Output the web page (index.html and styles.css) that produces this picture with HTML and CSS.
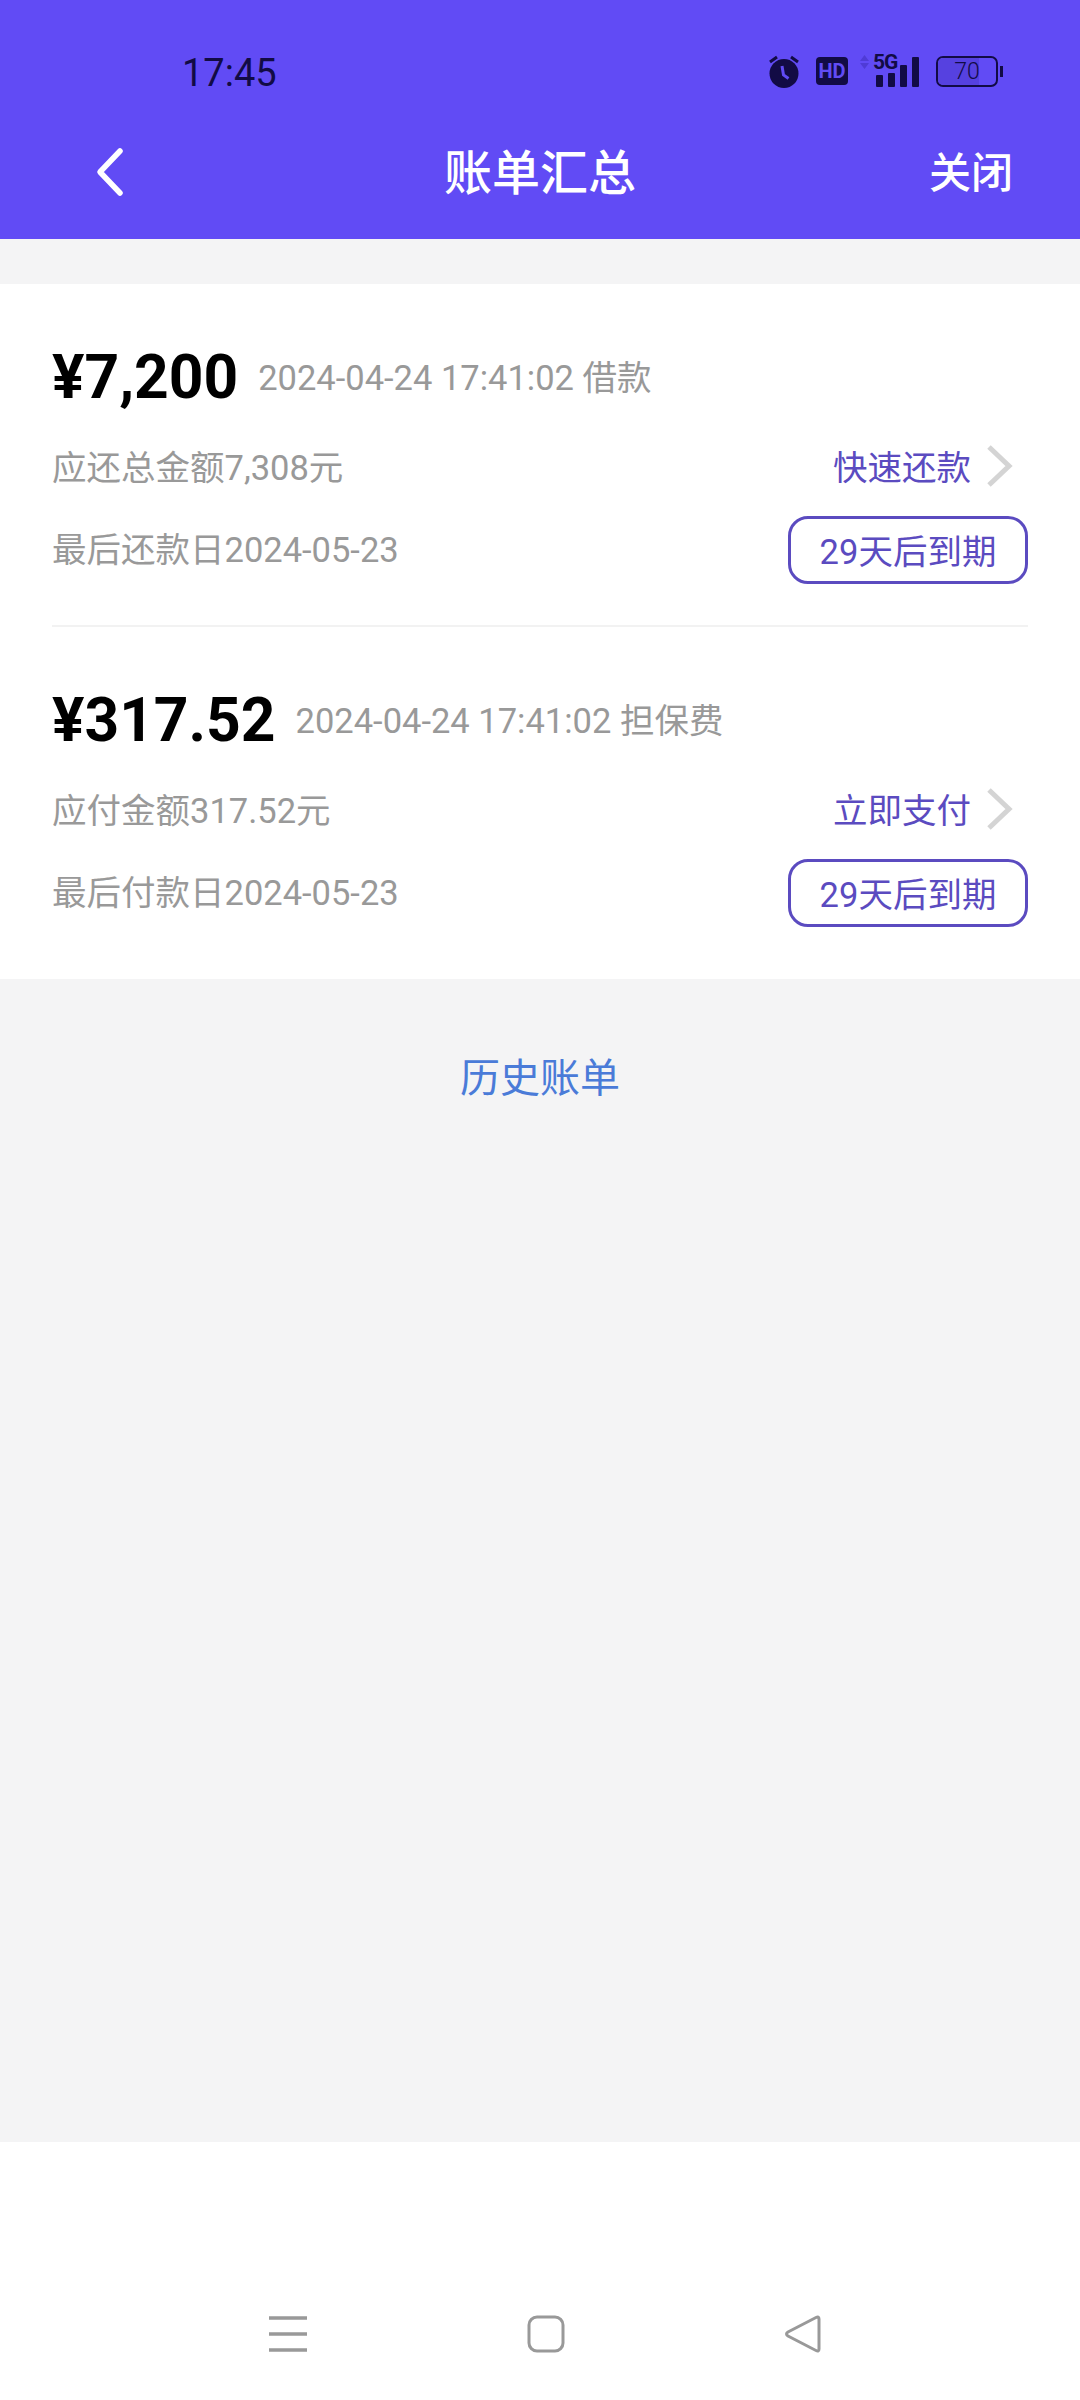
FILE: index.html
```html
<!DOCTYPE html>
<html lang="zh-CN">
<head>
    <meta charset="UTF-8" />
    <meta name="viewport" content="width=device-width, initial-scale=1.0" />
    <title>账单汇总</title>
    <link rel="stylesheet" href="styles.css">
</head>
<body>

<header class="top">
    <div class="status">
        <span class="time">17:45</span>
        <div class="status-icons">
            <svg class="ic-alarm" width="32" height="33" viewBox="0 0 32 33">
                <circle cx="16" cy="18.500" r="14.500" fill="#120b45"/>
                <path d="M2 7l7-5M30 7l-7-5" stroke="#120b45" stroke-width="3" fill="none"/>
                <path d="M14 11l1.500 9 5 3.500" stroke="#614bf5" stroke-width="3" fill="none"/>
            </svg>
            <span class="hd">HD</span>
            <div class="signal">
                <svg class="arrows" width="9" height="14" viewBox="0 0 9 14">
                    <path d="M4.500 0l4.500 6H0zM4.500 14L9 8H0z" fill="#4f3bd6"/>
                </svg>
                <span class="five-g">5G</span>
                <i class="bar b1"></i><i class="bar b2"></i><i class="bar b3"></i><i class="bar b4"></i>
            </div>
            <div class="battery">
                <div class="battery-body">
                    <div class="battery-fill" style="width:70%"></div>
                    <span>70</span>
                </div>
                <i class="battery-tip"></i>
            </div>
        </div>
    </div>
    <nav class="titlebar">
        <svg class="back" width="34" height="50" viewBox="0 0 34 50">
            <path d="M27 4L7 25l20 21" stroke="#fff" stroke-width="5.500" stroke-linecap="round" stroke-linejoin="round" fill="none"/>
        </svg>
        <h1>账单汇总</h1>
        <a class="close">关闭</a>
    </nav>
</header>

<main class="content">
    <section class="card">
        <div class="bill">
            <div class="bill-head">
                <span class="amount">¥7,200</span>
                <span class="meta">2024-04-24 17:41:02 借款</span>
            </div>
            <div class="bill-row">
                <span class="label">应还总金额7,308元</span>
                <a class="action">快速还款
                    <svg width="28" height="44" viewBox="0 0 28 44"><path d="M4 3l20 19L4 41" stroke="#d4d4d4" stroke-width="5" fill="none"/></svg>
                </a>
            </div>
            <div class="bill-row">
                <span class="label">最后还款日2024-05-23</span>
                <span class="due">29天后到期</span>
            </div>
        </div>
        <div class="bill">
            <div class="bill-head">
                <span class="amount">¥317.52</span>
                <span class="meta">2024-04-24 17:41:02 担保费</span>
            </div>
            <div class="bill-row">
                <span class="label">应付金额317.52元</span>
                <a class="action">立即支付
                    <svg width="28" height="44" viewBox="0 0 28 44"><path d="M4 3l20 19L4 41" stroke="#d4d4d4" stroke-width="5" fill="none"/></svg>
                </a>
            </div>
            <div class="bill-row">
                <span class="label">最后付款日2024-05-23</span>
                <span class="due">29天后到期</span>
            </div>
        </div>
    </section>
    <a class="history">历史账单</a>
</main>

<footer class="navbar">
    <svg width="38" height="38" viewBox="0 0 38 38">
        <path d="M0 3h38M0 19h38M0 35h38" stroke="#999" stroke-width="3.500" fill="none"/>
    </svg>
    <svg width="38" height="38" viewBox="0 0 38 38">
        <rect x="2" y="2" width="34" height="34" rx="8" stroke="#999" stroke-width="3" fill="none"/>
    </svg>
    <svg width="38" height="38" viewBox="0 0 38 38">
        <path d="M35 4v30q0 3-3 1.500L4 21q-3-2 0-4L32 2.500q3-1.500 3 1.500z" stroke="#999" stroke-width="3" fill="none"/>
    </svg>
</footer>

</body>
</html>
```

FILE: styles.css
```css
* { box-sizing: border-box; }
html, body { margin: 0; height: 2400px; }
body {
    display: flex; flex-direction: column;
    font-family: Roboto, "Noto Sans CJK SC", sans-serif;
    background: #fff; color: #999;
}

.top { height: 239px; background: #614bf5; color: #fff; flex-shrink: 0; }
.status {
    height: 124px; padding: 48px 77px 0 182px;
    display: flex; justify-content: space-between; align-items: flex-start;
    color: #120b45;
}
.time { font-size: 38px; line-height: 46px; margin-top: 2px; }
.status-icons { display: flex; align-items: center; height: 46px; }
.hd {
    width: 32px; height: 28px; margin: 0 12px 0 16px;
    border-radius: 4px; background: #120b45; color: #614bf5;
    font-size: 20px; font-weight: 700; line-height: 28px; text-align: center;
}
.signal {
    width: 59px; height: 32px; margin: 0 17px 0 0; padding-left: 16px;
    display: flex; align-items: flex-end; gap: 5px; position: relative;
}
.arrows { position: absolute; left: 0; top: 0; }
.five-g {
    position: absolute; left: 13px; top: -2px;
    font-size: 21px; font-weight: 700; line-height: 18px; letter-spacing: -1px;
}
.bar { width: 7px; background: #120b45; border-radius: 1px; display: block; }
.b1 { height: 12px; }
.b2 { height: 14px; }
.b3 { height: 22px; }
.b4 { height: 30px; }
.battery { display: flex; align-items: center; gap: 2px; }
.battery-body {
    width: 62px; height: 31px; border: 2.5px solid #120b45; border-radius: 7px;
    position: relative; overflow: hidden;
    display: flex; align-items: center; justify-content: center;
    font-size: 23px; font-weight: 300;
}
.battery-body span { position: relative; }
.battery-fill { position: absolute; left: 0; top: 0; bottom: 0; background: #5641e0; }
.battery-tip { width: 3px; height: 11px; background: #120b45; display: block; }

.titlebar {
    height: 115px; padding-bottom: 16px;
    display: grid; grid-template-columns: 1fr auto 1fr; align-items: center;
}
.back { margin: -4px 0 0 93px; }
.titlebar h1 { margin: 0; font-size: 48px; font-weight: 500; line-height: 50px; }
.close { justify-self: end; margin-right: 67px; font-size: 42px; font-weight: 500; line-height: 50px; }

.content { flex: 1; background: #f4f4f5; padding-top: 45px; display: flex; flex-direction: column; }
.card { background: #fff; padding: 0 52px; height: 695px; }
.bill { height: 343px; border-bottom: 2px solid #f2f2f2; padding-top: 63px; }
.bill:last-child { border-bottom: none; }
.bill-head { display: flex; align-items: center; gap: 20px; height: 62px; margin-bottom: 15px; }
.amount { font-size: 60.500px; font-weight: 700; color: #000; line-height: 62px; }
.meta { font-size: 34.500px; line-height: 62px; }
.bill-row { display: flex; justify-content: space-between; align-items: center; height: 82px; }
.label { font-size: 34.500px; }
.action {
    display: flex; align-items: center; gap: 14px; padding-right: 15px;
    color: #5b4bc0; font-size: 34.500px;
}
.action svg { margin-top: 2px; }
.due {
    width: 240px; height: 68px; margin-top: 6px; padding-bottom: 3px;
    border: 3px solid #5b4bc0; border-radius: 20px;
    display: flex; align-items: center; justify-content: center;
    color: #5b4bc0; font-size: 34.500px;
}
.history { margin-top: 70px; text-align: center; color: #4a7bd8; font-size: 40px; line-height: 60px; }

.navbar {
    height: 258px; flex-shrink: 0; background: #fff;
    display: flex; justify-content: space-between; align-items: flex-start;
    padding: 173px 258px 0 269px;
}
```
